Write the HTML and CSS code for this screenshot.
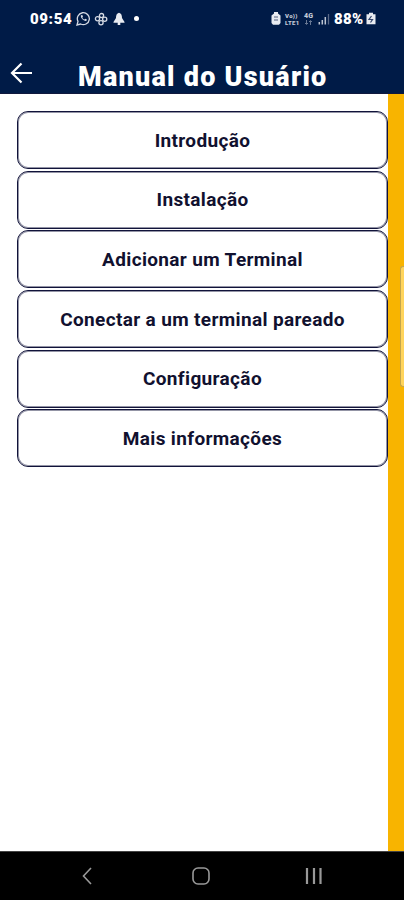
FILE: index.html
```html
<!DOCTYPE html>
<html lang="pt-BR">
<head>
<meta charset="utf-8">
<meta name="viewport" content="width=device-width">
<title>Manual do Usuário</title>
<link rel="stylesheet" href="styles.css">
</head>
<body>
<div class="screen">
  <header class="top">
    <div class="status">
      <div class="status-left">
        <span class="clock">09:54</span>
        <svg class="whatsapp" width="15" height="15" viewBox="0 0 15 15"><path d="M1 14l1-3.600A6 6 0 1 1 4.600 13z" fill="none" stroke="#d5dae4" stroke-width="1.300"/><path d="M5 4.300c-1 2.100 2.700 6.200 5.300 5.700l.6-1.400-1.600-.9-.9.8C7.300 8 6.700 7.300 6.300 6.400l.7-.8-.7-1.600z" fill="#d5dae4"/></svg>
        <svg class="fan" width="14" height="14" viewBox="0 0 14 14" fill="none" stroke="#d5dae4" stroke-width="1.300"><circle cx="7.500" cy="3.600" r="2.100"/><circle cx="3.500" cy="6.700" r="2.100"/><circle cx="10.700" cy="7.300" r="2.100"/><circle cx="7" cy="10.700" r="2.100"/></svg>
        <svg class="bell" width="12" height="14" viewBox="0 0 12 14" fill="#e8ebf1"><path d="M6 .8C3.700 1.200 3 3.500 3 6L.5 10v.7h11V10L9 6C9 3.500 8.300 1.200 6 .8zM4.700 10.700h2.600v2.300H4.700z"/></svg>
        <span class="dot"></span>
      </div>
      <div class="status-right">
        <svg class="saver" width="10" height="13" viewBox="0 0 10 13"><path d="M3 0h4v1.500l2.500 2V11L8 12.700H2L.5 11V3.500l2.500-2z" fill="#e8ebf1"/><path d="M3 5h4M3 8h4" stroke="#53617f" stroke-width="1.100"/></svg>
        <span class="net volte"><span>Vo))</span><span>LTE1</span></span>
        <span class="net data"><span>4G</span><svg width="9" height="5" viewBox="0 0 9 5"><path d="M2.500 0v4M1 3l1.500 1.500L4 3M6.500 5V1M5 2L6.500.5 8 2" fill="none" stroke="#687894"/></svg></span>
        <svg class="signal" width="12" height="12" viewBox="0 0 12 12"><path d="M1.300 9v2.500M4.300 7v4.500M7.300 4v7.500" stroke="#bdc5d3" stroke-width="1.500"/><path d="M10.500 1v10.500" stroke="#596987" stroke-width="1.300"/></svg>
        <span class="percent">88%</span>
        <svg class="battery" width="10" height="13" viewBox="0 0 10 13"><path d="M3 .8h4v1.500h2.500v10H.5v-10H3z" fill="#e8ebf1"/><path d="M5.500 4L3 7.500h3.500L4.500 10.500" fill="none" stroke="#33456c" stroke-width="1.200"/></svg>
      </div>
    </div>
    <div class="title-bar">
      <svg class="back" width="23" height="22" viewBox="0 0 23 22"><path d="M22 11H2M11.500 1.500L2 11l9.500 9.500" fill="none" stroke="#fff" stroke-width="2.200"/></svg>
      <h1 class="title">Manual do Usuário</h1>
    </div>
  </header>
  <main class="content">
    <nav class="menu">
      <button class="item">Introdução</button>
      <button class="item">Instalação</button>
      <button class="item">Adicionar um Terminal</button>
      <button class="item">Conectar a um terminal pareado</button>
      <button class="item">Configuração</button>
      <button class="item">Mais informações</button>
    </nav>
    <aside class="rail"><span class="handle"></span></aside>
  </main>
  <footer class="navbar">
    <svg width="12" height="18" viewBox="0 0 12 18"><path d="M10 1L2.500 9l7.500 8" fill="none" stroke="#999" stroke-width="1.600"/></svg>
    <svg class="home" width="18" height="18" viewBox="0 0 18 18"><rect x="1" y="1" width="16" height="16" rx="5" fill="none" stroke="#999" stroke-width="1.600"/></svg>
    <svg width="18" height="18" viewBox="0 0 18 18"><path d="M2 1v16M9 1v16M15.500 1v16" stroke="#999" stroke-width="2.200"/></svg>
  </footer>
</div>
</body>
</html>
```
FILE: styles.css
```css
* { box-sizing: border-box; }
body { margin: 0; font-family: Roboto, "Liberation Sans", sans-serif; }
.screen { width: 404px; height: 900px; display: flex; flex-direction: column; overflow: hidden; background: #fff; }
.top { height: 94px; background: #001b47; border-bottom: 1px solid #10183d; color: #fff; }
.status { height: 37px; padding: 0 28px 0 30px; display: flex; justify-content: space-between; align-items: center; }
.status-left, .status-right { display: flex; align-items: center; height: 37px; }
.clock { width: 46px; font-size: 15px; font-weight: 900; letter-spacing: .6px; }
.fan { margin-left: 3px; }
.bell { margin-left: 5px; }
.dot { width: 5px; height: 5px; margin-left: 9px; border-radius: 50%; background: #fff; }
.net { display: flex; flex-direction: column; font-size: 6px; line-height: 7px; font-weight: 900; color: #c3cad7; }
.volte { width: 16px; margin-left: 4px; letter-spacing: .3px; }
.data { width: 11px; margin-left: 2px; align-items: center; font-size: 7px; }
.signal { margin-left: 4px; }
.percent { width: 31px; margin-left: 4px; font-size: 15px; font-weight: 900; letter-spacing: .3px; }
.battery { margin-left: 1px; }
.title-bar { height: 56px; display: flex; padding-left: 10px; }
.back { margin-top: 25px; }
.title { margin: 23px 0 0 45px; font-size: 27px; line-height: 34px; font-weight: 900; letter-spacing: 1.250px; white-space: nowrap; }
.content { height: 757px; display: flex; }
.menu { width: 388px; padding: 17px 0 0 17px; display: flex; flex-direction: column; gap: 1.700px; }
.item { width: 371px; height: 58px; padding: 1px 0 0; border: 1px solid #11133a; border-radius: 11px; box-shadow: inset 0 0 0 1px rgba(17, 19, 58, .45); background: #fff; color: #11112f; font: 700 19px/24px Roboto, "Liberation Sans", sans-serif; letter-spacing: .35px; }
.rail { width: 16px; background: #f8b400; display: flex; justify-content: flex-end; }
.handle { width: 4px; height: 121px; margin-top: 172px; border: 1px solid #c5a64b; border-right: 0; border-radius: 3px 0 0 3px; background: #ffd45c; }
.navbar { height: 49px; background: #000; border-top: 1px solid #444; padding: 0 81px; display: flex; justify-content: space-between; align-items: center; }
.home { margin-left: 3px; }
```
